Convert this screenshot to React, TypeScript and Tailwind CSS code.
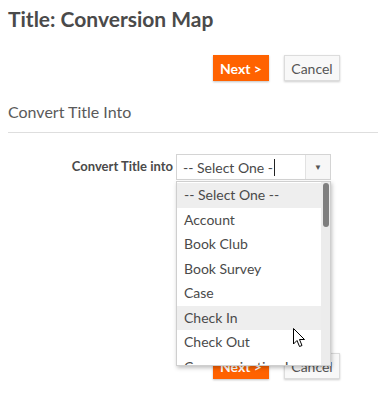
import React from "react";

const options = [
  "-- Select One --",
  "Account",
  "Book Club",
  "Book Survey",
  "Case",
  "Check In",
  "Check Out",
  "Communication Log",
];

function Buttons() {
  return (
    <div className="flex justify-end gap-[15px] pr-[38px]">
      <button type="button" className="w-[56px] h-[26px] bg-[#ff6200] text-white text-[14px] font-bold shadow-[0_1px_2px_rgba(0,0,0,0.25)]">
        Next &gt;
      </button>
      <button type="button" className="w-[56px] h-[26px] bg-[#f8f8f8] border border-[#dcdcdc] text-[#555] text-[14px] shadow-[0_1px_2px_rgba(0,0,0,0.2)]">
        Cancel
      </button>
    </div>
  );
}

function Cursor() {
  return (
    <svg width="13" height="21" viewBox="0 0 13 21" className="absolute left-[293px] top-[328px]">
      <path d="M0.5 0.5 L0.5 16 L4 12.5 L6.5 18.5 L9 17.5 L6.5 11.5 L11.5 11.5 Z" fill="white" stroke="black" strokeWidth="1" strokeLinejoin="miter" />
    </svg>
  );
}

export default function App() {
  return (
    <div className="relative w-[378px] h-[393px] overflow-hidden bg-white text-[#4a4a4a] font-['Lato',sans-serif]">
      <h1 className="pl-[8px] pt-[4px] text-[21px] font-bold leading-[30px] text-[#4a4a4a]">Title: Conversion Map</h1>
      <div className="mt-[21px]">
        <Buttons />
      </div>
      <div className="ml-[8px] mt-[20px] border-b border-[#dedede] pb-[9px] text-[16px] leading-[22px] text-[#5a5a5a]">
        Convert Title Into
      </div>
      <div className="mt-[21px] flex items-center">
        <div className="w-[176px] pr-[3px] text-right text-[13px] font-bold text-[#4a4a4a]">Convert Title into</div>
        <div className="flex h-[26px] w-[155px] border border-[#d4d4d4] bg-white">
          <div className="flex flex-1 items-center pl-[6px] text-[14px] text-[#4a4a4a]">
            -- Select One -<span className="ml-[1px] inline-block h-[17px] w-px bg-[#222]" />
          </div>
          <div className="flex w-[25px] items-center justify-center border-l border-[#e2e2e2] bg-[#f7f7f7]">
            <span className="text-[8px] text-[#555]">▼</span>
          </div>
        </div>
      </div>
      <div className="mt-[173px]">
        <Buttons />
      </div>

      <div className="absolute left-[176px] top-[181px] flex h-[185px] w-[155px] overflow-hidden border border-[#cfcfcf] bg-white shadow-[1px_2px_4px_rgba(0,0,0,0.25)]">
        <div className="flex-1 pt-[1px]">
          {options.map((o) => (
            <div
              key={o}
              className={`h-[24.5px] pl-[7px] text-[14px] leading-[24.5px] text-[#4a4a4a] whitespace-nowrap ${o === "-- Select One --" || o === "Check In" ? "bg-[#eeeeee]" : ""}`}
            >
              {o}
            </div>
          ))}
        </div>
        <div className="w-[9px] bg-[#ececec] pt-[1px] flex justify-center">
          <div className="h-[44px] w-[6px] rounded-[3px] bg-[#7f7f7f]" />
        </div>
      </div>
      <Cursor />
    </div>
  );
}
